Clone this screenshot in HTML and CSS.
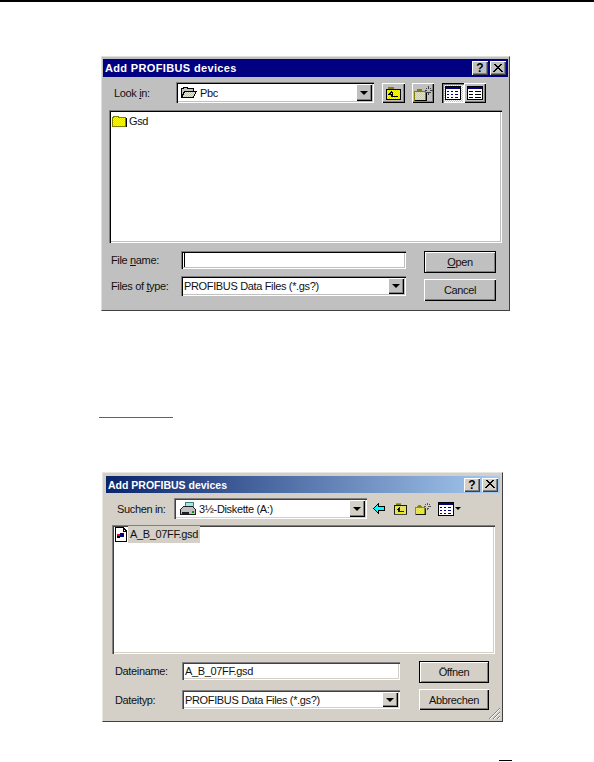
FILE: index.html
```html
<!DOCTYPE html>
<html lang="en">
<head>
<meta charset="utf-8">
<title>Add PROFIBUS devices</title>
<link rel="stylesheet" href="styles.css">
</head>
<body>
<svg class="sprite" width="0" height="0" aria-hidden="true">
  <defs>
    <pattern id="dither" width="2" height="2" patternUnits="userSpaceOnUse">
      <rect width="2" height="2" fill="#ffff00"/>
      <rect width="1" height="1" fill="#c8c8b0"/>
      <rect x="1" y="1" width="1" height="1" fill="#c8c8b0"/>
    </pattern>
    <symbol id="i-folder" viewBox="0 0 15 12">
      <path d="M1.5 2.5V1.5H6.5V2.5H13.5V11.5H.5V2.5Z" fill="url(#dither)" stroke="#808000"/>
      <path d="M14.5 3V12H1" fill="none" stroke="#000"/>
    </symbol>
    <symbol id="i-open" viewBox="0 0 17 13">
      <path d="M1.5 11V2.5H3V1.5H7V2.5H13.5V5" fill="#c0c0c0" stroke="#000"/>
      <path d="M1.5 11.5L4.5 5.5H16L13.5 11.5Z" fill="url(#dither)" stroke="#000"/>
    </symbol>
    <symbol id="i-up" viewBox="0 0 16 13">
      <path d="M2.5 2.5V.5H7.5V2.5" fill="#808000" stroke="#808000"/>
      <path d="M.5 2.5H14.5V12.5H.5Z" fill="url(#dither)" stroke="#000"/>
      <path d="M6 4.5L3.5 7H5.5V9.5H11.5M5 5.5H6V8.5" fill="none" stroke="#000"/>
    </symbol>
    <symbol id="i-new" viewBox="0 0 19 15">
      <path d="M3.5 5.5V3.5H7.5V5.5" fill="#808000" stroke="#808000"/>
      <path d="M.5 5.5H11.5V14.5H.5Z" fill="url(#dither)" stroke="#808000"/>
      <path d="M12 6.5V14.5H1" fill="none" stroke="#000"/>
      <path d="M14.5 0V3M14.5 6V9M11 4.5H13M16 4.5H18.5M12 2L13 3M17 2L16 3M12.5 7L13.500 6M16.500 7L15.500 6" stroke="#404040" fill="none"/>
    </symbol>
    <symbol id="i-list" viewBox="0 0 16 14">
      <path d="M.5 .5H15.500V13.500H.5Z" fill="#fff" stroke="#000"/>
      <rect x="1" y="1" width="14" height="2" fill="#000080"/>
      <path d="M2 5h2v1H2zM6 5h2v1H6zM10 5h3v1h-3zM2 8h2v1H2zM6 8h2v1H6zM10 8h3v1h-3zM2 11h2v1H2zM6 11h2v1H6zM10 11h3v1h-3z" fill="#000080"/>
    </symbol>
    <symbol id="i-details" viewBox="0 0 16 14">
      <path d="M.5 .5H15.500V13.500H.5Z" fill="#fff" stroke="#000"/>
      <rect x="1" y="1" width="14" height="2" fill="#000080"/>
      <path d="M2 5h4v1H2zM8 5h6v1H8zM2 8h4v1H2zM8 8h6v1H8zM2 11h4v1H2zM8 11h6v1H8z" fill="#000"/>
    </symbol>
    <symbol id="i-back" viewBox="0 0 12 11">
      <path d="M.5 5.500L5.500 .5V3.500H11.500V7.500H5.500V10.500Z" fill="#00ffff" stroke="#000"/>
    </symbol>
    <symbol id="i-drive" viewBox="0 0 16 14">
      <path d="M5.500 .5H13.500V6.500H5.500Z" fill="#9ce8e8" stroke="#408080"/>
      <path d="M.5 7.500L3.500 4.500H12.500L15.500 7.500V12.500H.5Z" fill="#c0c0c0" stroke="#202020"/>
      <path d="M2 10h7v2H2z" fill="#202020"/>
      <path d="M12 9h2v2h-2z" fill="#00a000"/>
    </symbol>
    <symbol id="i-file" viewBox="0 0 12 15">
      <path d="M.5 .5H8L11.500 4V14.500H.5Z" fill="#fff" stroke="#000"/>
      <path d="M8 1V4H11" fill="none" stroke="#000"/>
      <path d="M2 7h3v2H2z" fill="#ff0000"/>
      <path d="M5 6h4v4H5z" fill="#000080"/>
      <path d="M2 9h3v2H2z" fill="#000"/>
    </symbol>
  </defs>
</svg>

<header class="page-rule"></header>

<section class="win win-classic">
  <div class="title"><span class="title-text">Add PROFIBUS devices</span>
    <span class="caps">
      <span class="cap cap-help">?</span>
      <span class="cap cap-close"><svg width="10" height="9" viewBox="0 0 10 9"><path d="M1 0L9 8M2 0L10 8M9 0L1 8M8 0L0 8" stroke="#000" fill="none"/></svg></span>
    </span>
  </div>
  <div class="bar">
    <span class="bar-label">Look <u>i</u>n:</span>
    <div class="combo combo-look">
      <svg class="combo-ico" width="17" height="13"><use href="#i-open"/></svg>
      <span class="combo-text">Pbc</span>
      <span class="drop"><i class="tri"></i></span>
    </div>
    <span class="tool tool-up"><svg width="16" height="13"><use href="#i-up"/></svg></span>
    <span class="tool tool-new"><svg width="19" height="15"><use href="#i-new"/></svg></span>
    <span class="tool tool-list pressed"><svg width="16" height="14"><use href="#i-list"/></svg></span>
    <span class="tool tool-details"><svg width="16" height="14"><use href="#i-details"/></svg></span>
  </div>
  <div class="list">
    <div class="item"><svg width="15" height="12"><use href="#i-folder"/></svg><span class="item-name">Gsd</span></div>
  </div>
  <div class="form">
    <div class="fields">
      <div class="field field-a"><label class="lbl">File <u>n</u>ame:</label><div class="input"><i class="caret"></i></div></div>
      <div class="field field-b"><label class="lbl">Files of <u>t</u>ype:</label>
        <div class="combo combo-type"><span class="combo-text">PROFIBUS Data Files (*.gs?)</span><span class="drop"><i class="tri"></i></span></div>
      </div>
    </div>
    <div class="btns">
      <button class="btn btn-default"><u>O</u>pen</button>
      <button class="btn">Cancel</button>
    </div>
  </div>
</section>

<div class="link-rule"></div>

<section class="win win-xp">
  <div class="title"><span class="title-text">Add PROFIBUS devices</span>
    <span class="caps">
      <span class="cap cap-help">?</span>
      <span class="cap cap-close"><svg width="10" height="9" viewBox="0 0 10 9"><path d="M1 0L9 8M2 0L10 8M9 0L1 8M8 0L0 8" stroke="#000" fill="none"/></svg></span>
    </span>
  </div>
  <div class="bar">
    <span class="bar-label">Suchen in:</span>
    <div class="combo combo-look">
      <svg class="combo-ico" width="16" height="14"><use href="#i-drive"/></svg>
      <span class="combo-text">3½-Diskette (A:)</span>
      <span class="drop"><i class="tri"></i></span>
    </div>
    <span class="flat flat-back"><svg width="12" height="11"><use href="#i-back"/></svg></span>
    <span class="flat flat-up"><svg width="14" height="12" viewBox="0 0 16 13"><use href="#i-up"/></svg></span>
    <span class="flat flat-new"><svg width="16" height="14" viewBox="0 0 19 15"><use href="#i-new"/></svg></span>
    <span class="flat flat-view"><svg width="16" height="14"><use href="#i-list"/></svg><i class="tri tri-small"></i></span>
  </div>
  <div class="list">
    <div class="item"><svg width="12" height="15"><use href="#i-file"/></svg><span class="item-name item-sel">A_B_07FF.gsd</span></div>
  </div>
  <div class="form">
    <div class="fields">
      <div class="field field-a"><label class="lbl">Dateiname:</label><div class="input"><span class="input-text">A_B_07FF.gsd</span></div></div>
      <div class="field field-b"><label class="lbl">Dateityp:</label>
        <div class="combo combo-type"><span class="combo-text">PROFIBUS Data Files (*.gs?)</span><span class="drop"><i class="tri"></i></span></div>
      </div>
    </div>
    <div class="btns">
      <button class="btn btn-default">Öffnen</button>
      <button class="btn">Abbrechen</button>
    </div>
  </div>
  <svg class="grip" width="13" height="13" viewBox="0 0 13 13"><path d="M12 1L1 12M12 5L5 12M12 9L9 12" stroke="#808080" fill="none"/><path d="M12 2L2 12M12 6L6 12M12 10L10 12" stroke="#fff" fill="none"/></svg>
</section>

<div class="foot"><span class="foot-rule"></span></div>
</body>
</html>
```
FILE: styles.css
```css
* { box-sizing: border-box; }
html, body { margin: 0; padding: 0; }
body {
  width: 594px;
  height: 762px;
  background: #fff;
  font-family: "Liberation Sans", Arial, sans-serif;
  font-size: 11px;
  letter-spacing: -.35px;
  color: #000;
  overflow: hidden;
}
.sprite { display: block; height: 0; }
svg { display: block; shape-rendering: crispEdges; flex: none; }

.page-rule { height: 2px; background: #000; }

/* window chrome */
.win {
  position: relative;
  border: 1px solid;
  display: flex;
  flex-direction: column;
}
.win-classic {
  margin: 54px 0 0 101px;
  width: 409px;
  height: 255px;
  padding: 2px 1px 0;
  background: #c0c0c0;
  border-color: #dfdfdf #404040 #404040 #dfdfdf;
}
.win-xp {
  margin: 54px 0 0 102px;
  width: 401px;
  height: 250px;
  padding: 3px 1px 0 3px;
  background: #d4d0c8;
  border-color: #e8e6e0 #404040 #404040 #e8e6e0;
}
.title {
  height: 18px;
  flex: none;
  display: flex;
  align-items: center;
  justify-content: space-between;
  color: #fff;
  font-weight: 700;
  padding: 0 2px;
  font-size: 11px;
  letter-spacing: .35px;
}
.win-classic .title { background: #000080; }
.win-xp .title {
  height: 17px;
  margin-right: 1px;
  font-size: 10.5px;
  letter-spacing: 0;
  background: linear-gradient(90deg, #0a246a, #a6caf0);
}
.caps { display: flex; gap: 2px; }
.cap {
  width: 16px;
  height: 14px;
  display: flex;
  align-items: center;
  justify-content: center;
  color: #000;
  font-size: 12px;
  letter-spacing: 0;
  background: #c0c0c0;
  box-shadow: inset 1px 1px 0 #fff, inset -1px -1px 0 #404040, inset -2px -2px 0 #808080;
}
.win-xp .cap { background: #d4d0c8; }

/* top bar */
.bar { display: flex; align-items: center; height: 21px; flex: none; }
.win-classic .bar { margin-top: 5px; }
.win-xp .bar { margin-top: 5px; }
.bar-label { flex: none; color: #111; }
.win-classic .bar-label { width: 73px; padding-left: 11px; }
.win-xp .bar-label { width: 68px; padding-left: 11px; }

.combo {
  position: relative;
  display: flex;
  align-items: center;
  background: #fff;
  flex: none;
  box-shadow: inset 1px 1px 0 #808080, inset 2px 2px 0 #000, inset -1px -1px 0 #fff, inset -2px -2px 0 #c0c0c0;
}
.win-classic .combo-look { width: 198px; height: 21px; padding-left: 4px; }
.win-xp .combo-look { width: 193px; height: 21px; padding-left: 6px; }
.win-xp .combo { box-shadow: inset 1px 1px 0 #808080, inset 2px 2px 0 #404040, inset -1px -1px 0 #fff, inset -2px -2px 0 #d4d0c8; }
.combo-text { margin-left: 3px; white-space: nowrap; color: #111; }
.combo-type .combo-text { margin-left: 3px; }
.drop {
  position: absolute;
  right: 2px;
  top: 2px;
  bottom: 2px;
  width: 16px;
  background: #c0c0c0;
  display: flex;
  align-items: center;
  justify-content: center;
  box-shadow: inset 1px 1px 0 #fff, inset -1px -1px 0 #000, inset -2px -2px 0 #808080;
}
.win-xp .drop { background: #d4d0c8; }
.tri {
  display: block;
  width: 0;
  height: 0;
  border-style: solid;
  border-width: 4px 4px 0;
  border-color: #000 transparent transparent;
}
.tri-small { border-width: 3px 3px 0; margin-left: 1px; }

.tool {
  flex: none;
  height: 20px;
  align-self: flex-end;
  display: flex;
  align-items: center;
  justify-content: center;
  background: #c0c0c0;
  box-shadow: inset 1px 1px 0 #fff, inset -1px -1px 0 #000, inset -2px -2px 0 #808080;
}
.tool-up { width: 23px; margin-left: 8px; }
.tool-new { width: 22px; margin-left: 7px; }
.tool-list { width: 22px; margin-left: 8px; }
.tool-details { width: 22px; }
.pressed {
  background: repeating-conic-gradient(#fff 0 25%, #c0c0c0 0 50%) 0 0 / 2px 2px;
  box-shadow: inset 1px 1px 0 #000, inset 2px 2px 0 #808080, inset -1px -1px 0 #fff;
}
.flat { flex: none; display: flex; align-items: center; }
.flat-back { margin-left: 6px; }
.flat-up { margin-left: 9px; }
.flat-new { margin-left: 7px; }
.flat-view { margin-left: 7px; }

/* list */
.list {
  background: #fff;
  flex: none;
  padding: 3px;
}
.win-classic .list {
  margin: 7px 0 0 6px;
  width: 393px;
  height: 133px;
  box-shadow: inset 1px 1px 0 #808080, inset 2px 2px 0 #000, inset -1px -1px 0 #fff, inset -2px -2px 0 #c0c0c0;
}
.win-xp .list {
  margin: 6px 0 0 6px;
  width: 383px;
  height: 129px;
  padding: 2px 3px;
  box-shadow: inset 1px 1px 0 #808080, inset 2px 2px 0 #404040, inset -1px -1px 0 #fff, inset -2px -2px 0 #d4d0c8;
}
.item { display: flex; align-items: center; height: 15px; }
.item-name { margin-left: 2px; color: #111; }
.win-xp .item-name { margin-left: 1px; }
.item-sel { background: #d4d0c8; height: 17px; line-height: 17px; padding: 0 2px; }

/* bottom form */
.form { display: flex; flex: none; }
.win-classic .form { margin-top: 8px; }
.win-xp .form { margin-top: 8px; }
.fields { flex: none; display: flex; flex-direction: column; }
.win-classic .fields { width: 321px; gap: 7px; }
.win-xp .fields { width: 313px; gap: 10px; }
.field { display: flex; align-items: center; }
.field-a { height: 18px; }
.field-b { height: 20px; }
.win-xp .field-b { height: 19px; }
.lbl { flex: none; color: #111; }
.win-classic .lbl { width: 78px; padding-left: 8px; }
.win-xp .lbl { width: 76px; padding-left: 9px; }
.input {
  height: 100%;
  flex: none;
  background: #fff;
  display: flex;
  align-items: center;
  padding-left: 3px;
  box-shadow: inset 1px 1px 0 #808080, inset 2px 2px 0 #000, inset -1px -1px 0 #fff, inset -2px -2px 0 #c0c0c0;
}
.win-classic .input { width: 225px; }
.win-xp .input {
  width: 218px;
  box-shadow: inset 1px 1px 0 #808080, inset 2px 2px 0 #404040, inset -1px -1px 0 #fff, inset -2px -2px 0 #d4d0c8;
}
.win-classic .combo-type { width: 225px; height: 100%; }
.win-xp .combo-type { width: 218px; height: 100%; }
.caret { display: block; width: 1px; height: 14px; background: #000; }
.input-text { color: #111; }

.btns { flex: none; display: flex; flex-direction: column; }
.win-classic .btns { gap: 6px; width: 72px; }
.win-xp .btns { gap: 6px; width: 70px; margin-top: -1px; }
.btn {
  font: inherit;
  letter-spacing: inherit;
  height: 22px;
  padding: 0;
  border: 0;
  color: #111;
  background: #c0c0c0;
  box-shadow: inset 1px 1px 0 #fff, inset -1px -1px 0 #000, inset -2px -2px 0 #808080;
}
.win-xp .btn { background: #d4d0c8; }
.win-xp .btn + .btn { height: 21px; }
.btn-default { box-shadow: inset 0 0 0 1px #000, inset 2px 2px 0 #fff, inset -2px -2px 0 #808080; }

.grip { position: absolute; right: 1px; bottom: 1px; }

/* page furniture */
.link-rule { width: 74px; height: 1px; margin: 106px 0 0 99px; background: #1a6fe0; }
.foot { display: flex; justify-content: flex-end; padding-right: 82px; margin-top: 38px; }
.foot-rule { display: block; width: 13px; height: 1px; background: #000; }
```
